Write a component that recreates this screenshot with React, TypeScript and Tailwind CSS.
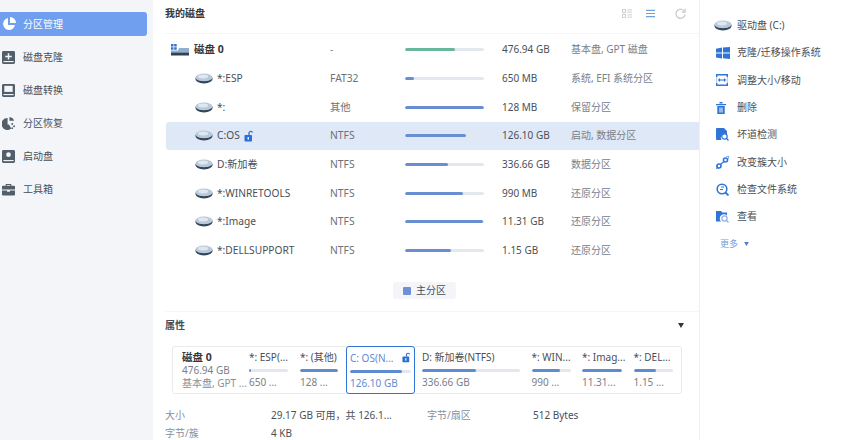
import type { ReactNode } from "react";

const FONT = "font-['Noto_Sans','Noto_Sans_CJK_SC',sans-serif]";

function DiskIcon({ className = "" }: { className?: string }) {
  return (
    <svg viewBox="0 0 20 12" className={`h-[11px] w-[18px] ${className}`}>
      <ellipse cx="10" cy="5" rx="9.500" ry="4.600" fill="#b9c9d9" />
      <ellipse cx="9" cy="3.800" rx="5.500" ry="2.200" fill="#dfe8f0" />
      <path d="M.5 5c1 2.800 4.500 4 9.500 4s8.500-1.200 9.500-4c.6 4-3.500 6.500-9.500 6.500S-.1 9 .5 5z" fill="#33475c" />
    </svg>
  );
}

function Lock({ size = 10 }: { size?: number }) {
  return (
    <svg viewBox="0 0 10 12" style={{ width: size, height: size * 1.2 }}>
      <path d="M5 5V3a1.800 1.800 0 0 1 3.500-.4" fill="none" stroke="#2a6fd6" strokeWidth="1.300" />
      <rect x="0.500" y="5" width="7.500" height="6.500" rx="0.800" fill="#2a6fd6" />
      <rect x="3.600" y="7" width="1.300" height="2.600" fill="#fff" />
    </svg>
  );
}

const G = "#535e6b";

const navIcons: ReactNode[] = [
  <svg key="pie" viewBox="0 0 14 14" className="h-[14px] w-[14px]">
    <path d="M6 1a6 6 0 1 0 7 7H6z" fill="#fff" />
    <path d="M8 0a6 6 0 0 1 6 6H8z" fill="#fff" />
  </svg>,
  <svg key="clone" viewBox="0 0 14 14" className="h-[13px] w-[13px]">
    <path d="M1.500 0h11A1.500 1.500 0 0 1 14 1.500v11a1.500 1.500 0 0 1-1.500 1.500h-11A1.500 1.500 0 0 1 0 12.500v-11A1.500 1.500 0 0 1 1.500 0z" fill={G} />
    <path d="M6.200 2.500h1.600v2.700h2.700v1.600H7.800v2.400H6.200V6.800H3.500V5.200h2.700z" fill="#f3f5f9" />
    <rect x="1.500" y="10.800" width="11" height="1.200" fill="#f3f5f9" />
  </svg>,
  <svg key="convert" viewBox="0 0 14 14" className="h-[13px] w-[13px]">
    <path d="M1.500 0h11A1.500 1.500 0 0 1 14 1.500v11a1.500 1.500 0 0 1-1.500 1.500h-11A1.500 1.500 0 0 1 0 12.500v-11A1.500 1.500 0 0 1 1.500 0z" fill={G} />
    <rect x="2.500" y="2" width="9" height="6.500" fill="#f3f5f9" />
    <rect x="1.500" y="10.800" width="11" height="1.200" fill="#f3f5f9" />
  </svg>,
  <svg key="recover" viewBox="0 0 14 14" className="h-[13px] w-[13px]">
    <path d="M6 1a6.500 6.500 0 1 0 4 11.500L7.500 8H6z" fill={G} />
    <path d="M8 0a6 6 0 0 1 5 4H8z" fill={G} />
    <circle cx="11" cy="7.500" r="1" fill={G} />
    <circle cx="13" cy="10" r="1" fill={G} />
    <circle cx="11" cy="12" r="1" fill={G} />
  </svg>,
  <svg key="boot" viewBox="0 0 14 14" className="h-[13px] w-[13px]">
    <path d="M1.500 0h11A1.500 1.500 0 0 1 14 1.500v11a1.500 1.500 0 0 1-1.500 1.500h-11A1.500 1.500 0 0 1 0 12.500v-11A1.500 1.500 0 0 1 1.500 0z" fill={G} />
    <circle cx="7" cy="5" r="2.500" fill="#f3f5f9" />
    <rect x="1.500" y="10.800" width="11" height="1.200" fill="#f3f5f9" />
  </svg>,
  <svg key="tools" viewBox="0 0 14 14" className="h-[13px] w-[13px]">
    <path d="M4 3V1h6v2h3a1 1 0 0 1 1 1v3H0V4a1 1 0 0 1 1-1zm1.200 0h3.600V2.200H5.200z" fill={G} />
    <path d="M0 8h5.500v1.500h3V8H14v4.500a1 1 0 0 1-1 1H1a1 1 0 0 1-1-1z" fill={G} />
  </svg>,
];

const navItems = ["分区管理", "磁盘克隆", "磁盘转换", "分区恢复", "启动盘", "工具箱"];

type Row = { name: string; lock?: boolean; fs: string; pct: number; size: string; desc: string };

const rows: Row[] = [
  { name: "*:ESP", fs: "FAT32", pct: 11, size: "650 MB", desc: "系统, EFI 系统分区" },
  { name: "*:", fs: "其他", pct: 100, size: "128 MB", desc: "保留分区" },
  { name: "C:OS", lock: true, fs: "NTFS", pct: 77, size: "126.10 GB", desc: "启动, 数据分区" },
  { name: "D:新加卷", fs: "NTFS", pct: 55, size: "336.66 GB", desc: "数据分区" },
  { name: "*:WINRETOOLS", fs: "NTFS", pct: 73, size: "990 MB", desc: "还原分区" },
  { name: "*:Image", fs: "NTFS", pct: 99, size: "11.31 GB", desc: "还原分区" },
  { name: "*:DELLSUPPORT", fs: "NTFS", pct: 58, size: "1.15 GB", desc: "还原分区" },
];

const BLUE = "#2f75d8";

const actions: { label: string; icon: ReactNode }[] = [
  { label: "驱动盘 (C:)", icon: <DiskIcon className="-ml-[2px]" /> },
  {
    label: "克隆/迁移操作系统",
    icon: (
      <svg viewBox="0 0 14 12" className="h-[12px] w-[14px]">
        <path d="M0 1.800 6 .6v4.900H0zM7 .4 14 0v5.500H7zM0 6.500h6v4.900l-6-1zM7 6.500h7V12l-7-.8z" fill={BLUE} />
      </svg>
    ),
  },
  {
    label: "调整大小/移动",
    icon: (
      <svg viewBox="0 0 12 12" className="h-[12px] w-[12px]">
        <path d="M.7 3V.7h10.600V3M.7 9v2.300h10.600V9" fill="none" stroke={BLUE} strokeWidth="1.400" />
        <path d="M.7 3v6M11.300 3v6" stroke="#a9c4ea" strokeWidth="1" />
        <path d="M2.500 6h7M2.500 6l1.500-1.400M2.500 6 4 7.400M9.500 6 8 4.600M9.500 6 8 7.400" stroke={BLUE} strokeWidth="1.100" fill="none" />
      </svg>
    ),
  },
  {
    label: "删除",
    icon: (
      <svg viewBox="0 0 10 12" className="h-[12px] w-[10px]">
        <path d="M0 2h10v1.300H0zM3.500 0h3v1.500h-3z" fill={BLUE} />
        <path d="M1.300 4h7.400v8H1.300zM3.500 5.500v5h1v-5zM5.500 5.500v5h1v-5z" fill={BLUE} fillRule="evenodd" />
      </svg>
    ),
  },
  {
    label: "坏道检测",
    icon: (
      <svg viewBox="0 0 13 13" className="h-[13px] w-[13px]">
        <path d="M1 0h7l3 3v3.500A4 4 0 0 0 5.500 12H1a1 1 0 0 1-1-1V1a1 1 0 0 1 1-1z" fill={BLUE} />
        <circle cx="8.500" cy="8.500" r="2.700" fill="none" stroke={BLUE} strokeWidth="1.200" />
        <path d="m10.500 10.500 2 2" stroke={BLUE} strokeWidth="1.200" />
      </svg>
    ),
  },
  {
    label: "改变簇大小",
    icon: (
      <svg viewBox="0 0 13 13" className="h-[13px] w-[13px]">
        <circle cx="3" cy="10" r="2" fill="none" stroke={BLUE} strokeWidth="1.600" />
        <circle cx="9.500" cy="4" r="2" fill="none" stroke={BLUE} strokeWidth="1.600" />
        <path d="M4.500 8.500 8 5.500" stroke={BLUE} strokeWidth="1.200" />
        <path d="M10 0h3v3M0 9v4h3" stroke={BLUE} strokeWidth="1" fill="none" />
      </svg>
    ),
  },
  {
    label: "检查文件系统",
    icon: (
      <svg viewBox="0 0 13 13" className="h-[13px] w-[13px]">
        <circle cx="6" cy="6" r="4.800" fill="none" stroke={BLUE} strokeWidth="1.600" />
        <path d="M5 4h3M4 6.500h3" stroke={BLUE} strokeWidth="1" />
        <path d="m9.500 9.500 3 3" stroke={BLUE} strokeWidth="1.800" />
      </svg>
    ),
  },
  {
    label: "查看",
    icon: (
      <svg viewBox="0 0 13 13" className="h-[13px] w-[13px]">
        <path d="M0 1h5l1.500 1.500H11v3A4 4 0 0 0 5 11.500H0z" fill={BLUE} />
        <circle cx="8.500" cy="8.500" r="2.600" fill="none" stroke="#8fb0de" strokeWidth="1.200" />
        <path d="m10.500 10.500 2 2" stroke="#8fb0de" strokeWidth="1.200" />
      </svg>
    ),
  },
];

function Bar({ pct, color = "bg-[#6a8fd0]" }: { pct: number; color?: string }) {
  return (
    <div className="h-[3px] w-full overflow-hidden rounded-full bg-[#e3e8ef]">
      <div className={`h-full rounded-full ${color}`} style={{ width: `${pct}%` }} />
    </div>
  );
}

const cards = [
  { w: "w-[39px]", title: "*: ESP(...", pct: 6, sub: "650 ..." },
  { w: "w-[38px]", title: "*: (其他)", pct: 100, sub: "128 ..." },
];
const cardsAfter = [
  { w: "w-[39px]", title: "*: WIN...", pct: 73, sub: "990 ..." },
  { w: "w-[40px]", title: "*: Imag...", pct: 100, sub: "11.31..." },
  { w: "w-[39px]", title: "*: DEL...", pct: 57, sub: "1.15 ..." },
];

function PartCard({ w, title, pct, sub }: { w: string; title: string; pct: number; sub: string }) {
  return (
    <div className={`${w} shrink-0`}>
      <div className="text-[10px] leading-[14px] whitespace-nowrap text-[#4a4f57]">{title}</div>
      <div className="mt-[5px]">
        <Bar pct={pct} color="bg-[#5f8bd2]" />
      </div>
      <div className="mt-[3px] text-[10px] leading-[14px] whitespace-nowrap text-[#7a8088]">{sub}</div>
    </div>
  );
}

export default function App() {
  return (
    <div className={`flex h-[440px] w-[865px] overflow-hidden bg-white ${FONT}`}>
      {/* left nav */}
      <aside className="w-[153px] shrink-0 bg-[#f3f5f9] pt-[12px]">
        {navItems.map((item, i) => (
          <div
            key={item}
            className={`mb-[9px] flex h-[24px] w-[147px] items-center rounded-r-[3px] pl-[2px] text-[10px] ${
              i === 0 ? "bg-[#6f9fee] text-white" : "text-[#4a4f57]"
            }`}
          >
            <span className="flex w-[21px] shrink-0 items-center">{navIcons[i]}</span>
            <span className="pt-[1px]">{item}</span>
          </div>
        ))}
      </aside>

      {/* main */}
      <main className="w-[546px] shrink-0 pl-[12px]">
        <div className="flex h-[34px] items-center justify-between border-b border-[#f4f5f7] pb-[6px] pr-[13px]">
          <span className="text-[10px] font-bold text-[#33383f]">我的磁盘</span>
          <div className="flex items-center gap-[14px]">
            <svg viewBox="0 0 11 10" className="h-[9px] w-[10px]">
              <path d="M.5.500h3.500v3.500H.5zM.5 6h3.500v3.500H.5z" fill="none" stroke="#c3c8cf" />
              <path d="M6 1h5M6 3.500h5M6 6.500h5M6 9h5" stroke="#c3c8cf" />
            </svg>
            <svg viewBox="0 0 10 9" className="h-[9px] w-[9px]">
              <path d="M0 1h10M0 4.500h10M0 8h10" stroke="#6f9fdc" strokeWidth="1.200" />
            </svg>
            <svg viewBox="0 0 12 12" className="ml-[6px] h-[11px] w-[11px]">
              <path d="M10.500 4A5 5 0 1 0 11 7" fill="none" stroke="#c3c8cf" strokeWidth="1.300" />
              <path d="M11 .800V4.500H7.500" fill="none" stroke="#c3c8cf" strokeWidth="1.300" />
            </svg>
          </div>
        </div>

        <div className="ml-[1px] pt-[1.500px]">
          <div className="grid h-[28.700px] grid-cols-[164px_75px_97px_69px_1fr] items-center text-[10px]">
            <div className="flex items-center gap-[5px] pl-[5px] font-bold text-[#33383f]">
              <svg viewBox="0 0 18 12" className="h-[12px] w-[18px]">
                <path d="M0 0h2.500v2.500H0zM3.200 0h2.500v2.500H3.200zM0 3.200h2.500v2.500H0zM3.200 3.200h2.500v2.500H3.200z" fill="#2f75d8" />
                <path d="M0 6.500h7L8 4h10v4.500H0z" fill="#8fb0cf" />
                <rect x="0" y="8.500" width="18" height="3" fill="#2f4258" />
              </svg>
              <span className="text-[10.500px]">磁盘 0</span>
            </div>
            <span className="text-[#7a8088]">-</span>
            <div className="w-[79px]">
              <Bar pct={63} color="bg-[#69b79a]" />
            </div>
            <span className="text-[#4a4f57]">476.94 GB</span>
            <span className="text-[#7a8088]">基本盘, GPT 磁盘</span>
          </div>

          {rows.map((r) => (
            <div
              key={r.name}
              className={`grid h-[28.700px] grid-cols-[164px_75px_97px_69px_1fr] items-center text-[10px] ${
                r.lock ? "rounded-l-[3px] bg-[#dfe8f7]" : ""
              }`}
            >
              <div className="flex items-center gap-[4px] pl-[29px] text-[10.200px] text-[#4a4f57]">
                <DiskIcon />
                <span className="whitespace-nowrap">{r.name}</span>
                {r.lock && <Lock />}
              </div>
              <span className="text-[10.300px] text-[#6c727a]">{r.fs}</span>
              <div className="w-[79px]">
                <Bar pct={r.pct} />
              </div>
              <span className="text-[#4a4f57]">{r.size}</span>
              <span className="text-[#7a8088]">{r.desc}</span>
            </div>
          ))}
        </div>

        <div className="mt-[17px] flex justify-center border-b border-[#f4f5f7] pb-[12px] pr-[15px]">
          <div className="flex h-[17px] w-[63px] items-center justify-center gap-[5px] rounded-[3px] bg-[#f3f5f9] text-[10px] text-[#4a4f57]">
            <span className="h-[8px] w-[8px] rounded-[1px] bg-[#6f8fd6]" />
            主分区
          </div>
        </div>

        <div className="flex items-center justify-between pr-[15px] pt-[5px]">
          <span className="text-[10px] leading-[16px] font-bold text-[#4a4f57]">属性</span>
          <svg viewBox="0 0 6 5" className="h-[5px] w-[6px]">
            <path d="M0 0h6L3 5z" fill="#33383f" />
          </svg>
        </div>

        <div className="mt-[13px] ml-[7px] flex h-[48px] w-[510px] items-stretch rounded-[3px] border border-[#e8eaee] pl-[9px]">
          <div className="w-[67px] shrink-0 pt-[3px]">
            <div className="text-[10.500px] leading-[14px] font-bold text-[#33383f]">磁盘 0</div>
            <div className="text-[10px] leading-[13px] text-[#7a8088]">476.94 GB</div>
            <div className="text-[10px] leading-[13px] whitespace-nowrap text-[#8a9098]">基本盘, GPT ...</div>
          </div>
          <div className="flex gap-[12px] pt-[3px]">
            {cards.map((c) => (
              <PartCard key={c.title} {...c} />
            ))}
          </div>
          <div className="-my-px ml-[8px] w-[69px] shrink-0 rounded-[3px] border-[1.500px] border-[#2f75d8] px-[3px] pt-[3.500px]">
            <div className="flex items-center justify-between text-[10px] leading-[14px] whitespace-nowrap text-[#5f8bd2]">
              <span>C: OS(N...</span>
              <Lock size={9} />
            </div>
            <div className="mt-[5px]">
              <Bar pct={86} color="bg-[#5f8bd2]" />
            </div>
            <div className="mt-[3px] text-[10px] leading-[14px] text-[#5f8bd2]">126.10 GB</div>
          </div>
          <div className="flex gap-[11.500px] pl-[7px] pt-[3px]">
            <PartCard w="w-[98px]" title="D: 新加卷(NTFS)" pct={55} sub="336.66 GB" />
            {cardsAfter.map((c) => (
              <PartCard key={c.title} {...c} />
            ))}
          </div>
        </div>

        <div className="mt-[16px] grid grid-cols-[106px_156px_106px_1fr] gap-y-[8px] text-[10px] leading-[10px]">
          <span className="text-[#8a9098]">大小</span>
          <span className="whitespace-nowrap text-[#4a4f57]">29.17 GB 可用，共 126.1...</span>
          <span className="text-[#8a9098]">字节/扇区</span>
          <span className="text-[#4a4f57]">512 Bytes</span>
          <span className="text-[#8a9098]">字节/簇</span>
          <span className="text-[#4a4f57]">4 KB</span>
        </div>
      </main>

      {/* right actions */}
      <aside className="flex-1 border-l border-[#eef0f3] pl-[16px] pt-[12px]">
        {actions.map((a) => (
          <div key={a.label} className="flex h-[27.300px] items-center text-[10px] text-[#4a4f57]">
            <span className="flex w-[21px] shrink-0 items-center">{a.icon}</span>
            <span className="whitespace-pre">{a.label}</span>
          </div>
        ))}
        <div className="ml-[4px] flex h-[27px] items-center gap-[6px] text-[9px] text-[#6f9fdc]">
          更多
          <svg viewBox="0 0 6 5" className="h-[4px] w-[5px]">
            <path d="M0 0h6L3 5z" fill="#4f80d0" />
          </svg>
        </div>
      </aside>
    </div>
  );
}
